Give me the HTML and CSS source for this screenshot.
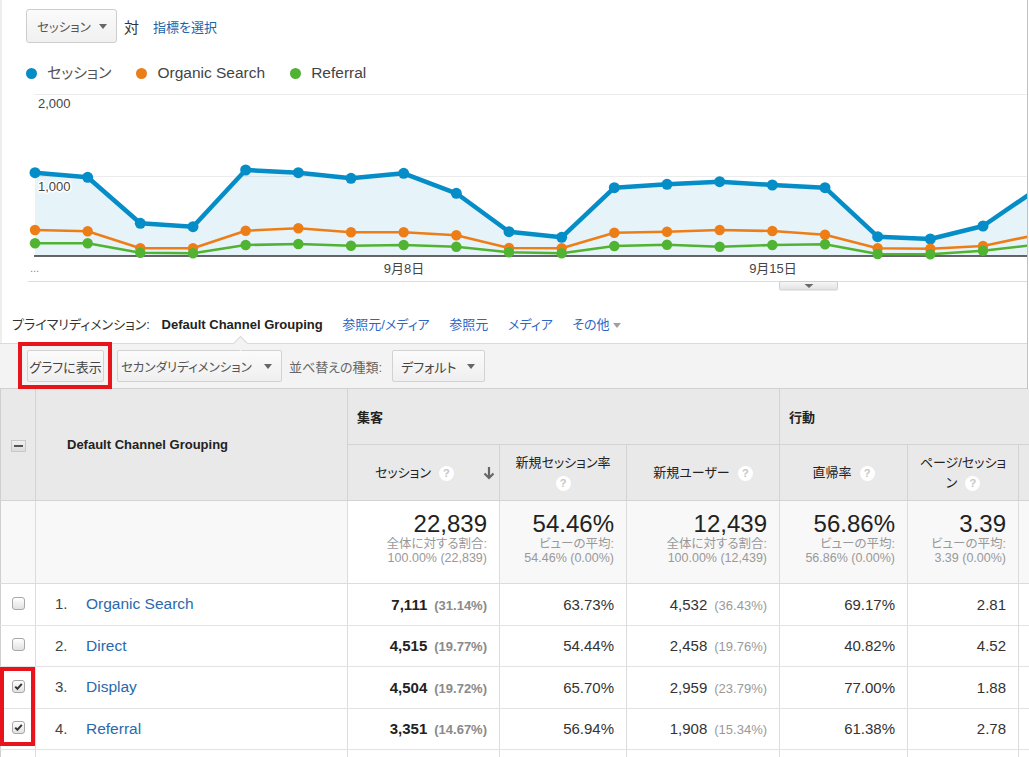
FILE: index.html
```html
<!DOCTYPE html>
<html lang="ja">
<head>
<meta charset="utf-8">
<title>Channels</title>
<link rel="stylesheet" href="styles.css">
</head>
<body>
<div class="top">
  <div class="controls">
    <div class="select metric-select"><span>セッション</span><span class="caret"></span></div>
    <span class="vs">対</span>
    <a class="link pick" href="#">指標を選択</a>
  </div>
  <div class="legend">
    <span class="lg"><span class="dot blue"></span><span class="lg-jp">セッション</span></span>
    <span class="lg"><span class="dot orange"></span>Organic Search</span>
    <span class="lg"><span class="dot green"></span>Referral</span>
  </div>
  <svg class="chart" width="1027" height="202" viewBox="0 0 1027 202">
    <defs>
      <clipPath id="clip"><rect x="0" y="0" width="1027" height="202"/></clipPath>
      <marker id="mb" viewBox="-6 -6 12 12" refX="0" refY="0" markerWidth="12" markerHeight="12" markerUnits="userSpaceOnUse"><circle r="5.5" fill="#058dc7"/></marker>
      <marker id="mo" viewBox="-6 -6 12 12" refX="0" refY="0" markerWidth="12" markerHeight="12" markerUnits="userSpaceOnUse"><circle r="5.2" fill="#ed7e17"/></marker>
      <marker id="mg" viewBox="-6 -6 12 12" refX="0" refY="0" markerWidth="12" markerHeight="12" markerUnits="userSpaceOnUse"><circle r="5.2" fill="#50b432"/></marker>
      <linearGradient id="tabg" x1="0" y1="0" x2="0" y2="1"><stop offset="0" stop-color="#f7f7f7"/><stop offset="1" stop-color="#e2e2e2"/></linearGradient>
    </defs>
    <line x1="34" y1="4.5" x2="1027" y2="4.5" class="grid"/>
    <line x1="34" y1="86.5" x2="1027" y2="86.5" class="grid"/>
    <g clip-path="url(#clip)">
      <polygon class="area" points="35,166 35,82.7 87.67,87.3 140.33,133.3 193,136.7 245.67,80 298.33,82.7 351,88.3 403.67,83.3 456.33,103.3 509,141.7 561.67,147.3 614.33,97.7 667,94.3 719.67,91.7 772.33,95 825,97.7 877.67,146.7 930.33,149 983,136 1035.67,100 1035.67,166"/>
    </g>
    <text x="38" y="18" class="ylab">2,000</text>
    <text x="38" y="101" class="ylab halo">1,000</text>
    <line x1="34" y1="166" x2="1027" y2="166" class="base"/>
    <g clip-path="url(#clip)">
      <polyline class="s-blue" marker-start="url(#mb)" marker-mid="url(#mb)" points="35,82.7 87.67,87.3 140.33,133.3 193,136.7 245.67,80 298.33,82.7 351,88.3 403.67,83.3 456.33,103.3 509,141.7 561.67,147.3 614.33,97.7 667,94.3 719.67,91.7 772.33,95 825,97.7 877.67,146.7 930.33,149 983,136 1035.67,100"/>
      <polyline class="s-orange" marker-start="url(#mo)" marker-mid="url(#mo)" points="35,140 87.67,141.3 140.33,158.3 193,158.3 245.67,140.7 298.33,138.3 351,142.3 403.67,142.3 456.33,145.3 509,158 561.67,158.3 614.33,142.7 667,141.7 719.67,140 772.33,141 825,144.7 877.67,158.3 930.33,158.7 983,156 1035.67,145"/>
      <polyline class="s-green" marker-start="url(#mg)" marker-mid="url(#mg)" points="35,153.3 87.67,153.3 140.33,162.7 193,163.3 245.67,155 298.33,154 351,155.7 403.67,155 456.33,156.7 509,162.3 561.67,163.3 614.33,156 667,154.7 719.67,156.7 772.33,155 825,154.3 877.67,164 930.33,164.3 983,160.7 1035.67,154.7"/>
    </g>
    <text x="30" y="182" class="dots">...</text>
    <text x="404" y="183" class="xlab" text-anchor="middle">9月8日</text>
    <text x="773" y="183" class="xlab" text-anchor="middle">9月15日</text>
    <line x1="28" y1="191.5" x2="1027" y2="191.5" class="bottom"/>
    <rect x="779.5" y="191.5" width="58" height="8.5" rx="1.5" fill="url(#tabg)" stroke="#cfcfcf"/>
    <polygon points="804.5,194 813.5,194 809,198" fill="#6a6a6a"/>
  </svg>
  <div class="dims">
    <span class="dim-label">プライマリディメンション:</span>
    <span class="dim-current">Default Channel Grouping</span>
    <a class="dim-link" href="#">参照元/メディア</a>
    <a class="dim-link" href="#">参照元</a>
    <a class="dim-link" href="#">メディア</a>
    <a class="dim-link" href="#">その他<span class="caret small"></span></a>
  </div>
  <div class="toolbar">
    <div class="btn btn-graph">グラフに表示</div>
    <div class="btn btn-second"><span>セカンダリディメンション</span><span class="caret"></span></div>
    <span class="sort-label">並べ替えの種類:</span>
    <div class="btn btn-default"><span>デフォルト</span><span class="caret"></span></div>
  </div>
</div>

<div class="table-wrap">
  <table class="data">
    <colgroup>
      <col class="c-chk"><col class="c-dim"><col class="c-ses"><col class="c-nsr"><col class="c-nu"><col class="c-br"><col class="c-pps"><col class="c-rest">
    </colgroup>
    <thead>
      <tr class="h1">
        <th rowspan="2" class="chk"><span class="minus"></span></th>
        <th rowspan="2" class="dimh">Default Channel Grouping</th>
        <th colspan="3" class="grp">集客</th>
        <th colspan="3" class="grp">行動</th>
      </tr>
      <tr class="h2">
        <th class="mh"><div class="hsort"><span class="ht">セッション<span class="q">?</span></span><svg class="arrow" width="12" height="14" viewBox="0 0 12 14"><path d="M6 1V12M1.5 7.5L6 12L10.5 7.5" fill="none" stroke="#666" stroke-width="2.2"/></svg></div></th>
        <th class="mh">新規セッション率<br><span class="q q0">?</span></th>
        <th class="mh">新規ユーザー<span class="q">?</span></th>
        <th class="mh">直帰率<span class="q">?</span></th>
        <th class="mh">ページ/セッショ<br>ン<span class="q">?</span></th>
        <th class="mh"></th>
      </tr>
    </thead>
    <tbody>
      <tr class="totals">
        <td class="chk"></td>
        <td></td>
        <td class="tot sorted"><div class="big">22,839</div><div class="sub">全体に対する割合:</div><div class="sub">100.00% (22,839)</div></td>
        <td class="tot"><div class="big">54.46%</div><div class="sub">ビューの平均:</div><div class="sub">54.46% (0.00%)</div></td>
        <td class="tot"><div class="big">12,439</div><div class="sub">全体に対する割合:</div><div class="sub">100.00% (12,439)</div></td>
        <td class="tot"><div class="big">56.86%</div><div class="sub">ビューの平均:</div><div class="sub">56.86% (0.00%)</div></td>
        <td class="tot"><div class="big">3.39</div><div class="sub">ビューの平均:</div><div class="sub">3.39 (0.00%)</div></td>
        <td></td>
      </tr>
      <tr class="row">
        <td class="chk"><span class="cb"></span></td>
        <td class="dimc"><span class="idx">1.</span><a class="rowlink" href="#">Organic Search</a></td>
        <td class="num"><span class="b">7,111</span><span class="pct bp">(31.14%)</span></td>
        <td class="num">63.73%</td>
        <td class="num">4,532<span class="pct">(36.43%)</span></td>
        <td class="num">69.17%</td>
        <td class="num">2.81</td>
        <td></td>
      </tr>
      <tr class="row">
        <td class="chk"><span class="cb"></span></td>
        <td class="dimc"><span class="idx">2.</span><a class="rowlink" href="#">Direct</a></td>
        <td class="num"><span class="b">4,515</span><span class="pct bp">(19.77%)</span></td>
        <td class="num">54.44%</td>
        <td class="num">2,458<span class="pct">(19.76%)</span></td>
        <td class="num">40.82%</td>
        <td class="num">4.52</td>
        <td></td>
      </tr>
      <tr class="row">
        <td class="chk"><span class="cb on"><svg width="11" height="11" viewBox="0 0 11 11"><path d="M2.2 5.6L4.4 7.8L8.8 2.8" fill="none" stroke="#333" stroke-width="2"/></svg></span></td>
        <td class="dimc"><span class="idx">3.</span><a class="rowlink" href="#">Display</a></td>
        <td class="num"><span class="b">4,504</span><span class="pct bp">(19.72%)</span></td>
        <td class="num">65.70%</td>
        <td class="num">2,959<span class="pct">(23.79%)</span></td>
        <td class="num">77.00%</td>
        <td class="num">1.88</td>
        <td></td>
      </tr>
      <tr class="row">
        <td class="chk"><span class="cb on"><svg width="11" height="11" viewBox="0 0 11 11"><path d="M2.2 5.6L4.4 7.8L8.8 2.8" fill="none" stroke="#333" stroke-width="2"/></svg></span></td>
        <td class="dimc"><span class="idx">4.</span><a class="rowlink" href="#">Referral</a></td>
        <td class="num"><span class="b">3,351</span><span class="pct bp">(14.67%)</span></td>
        <td class="num">56.94%</td>
        <td class="num">1,908<span class="pct">(15.34%)</span></td>
        <td class="num">61.38%</td>
        <td class="num">2.78</td>
        <td></td>
      </tr>
      <tr class="row">
        <td class="chk"></td><td></td><td></td><td></td><td></td><td></td><td></td><td></td>
      </tr>
    </tbody>
  </table>
</div>

<div class="mark mark-btn"></div>
<div class="mark mark-chk"></div>
</body>
</html>
```

FILE: styles.css
```css
html, body {
  margin: 0;
  padding: 0;
  overflow: hidden;
  background: #fff;
}
body {
  width: 1029px;
  height: 757px;
  position: relative;
  font-family: "Liberation Sans", "Noto Sans CJK JP", sans-serif;
  font-feature-settings: "palt" 1;
  font-size: 13px;
  color: #333;
}
a { text-decoration: none; }

.top {
  width: 1027px;
  border-right: 1px solid #b7c3cf;
  box-shadow: inset 2px 0 0 #eeeeee;
}

/* metric selector row */
.controls {
  display: flex;
  align-items: center;
  height: 34px;
  padding: 9px 0 0 26px;
}
.select {
  display: flex;
  align-items: center;
  justify-content: space-between;
  box-sizing: border-box;
  height: 34px;
  padding: 0 9px 0 10px;
  border: 1px solid #cdcdcd;
  border-radius: 3px;
  background: linear-gradient(#fbfbfb, #f0f0f0);
  color: #555;
  font-size: 12.5px;
}
.metric-select { width: 91px; }
.caret {
  width: 0;
  height: 0;
  border-left: 4.5px solid transparent;
  border-right: 4.5px solid transparent;
  border-top: 5px solid #666;
}
.caret.small {
  display: inline-block;
  margin-left: 3px;
  vertical-align: middle;
  border-top-color: #a0a0a0;
}
.vs {
  margin-left: 7px;
  font-size: 15px;
  color: #333;
}
.link {
  color: #2262a8;
  font-size: 13px;
}
.pick { margin-left: 14px; }

/* legend */
.legend {
  display: flex;
  align-items: center;
  height: 20px;
  margin-top: 20px;
  padding-left: 26px;
  font-size: 15.5px;
  line-height: 20px;
  color: #444;
}
.lg {
  display: flex;
  align-items: center;
  margin-right: 25px;
}
.lg-jp { color: #555; font-size: 15px; }
.dot {
  width: 11px;
  height: 11px;
  border-radius: 50%;
  margin-right: 10px;
}
.dot.blue { background: #058dc7; }
.dot.orange { background: #ed7e17; }
.dot.green { background: #50b432; }

/* chart */
.chart {
  display: block;
  margin-top: 7px;
}
.chart .grid { stroke: #ececec; stroke-width: 1; }
.chart .base { stroke: #333; stroke-width: 1.3; }
.chart .bottom { stroke: #dcdcdc; stroke-width: 1; }
.chart .area { fill: #058dc7; fill-opacity: 0.1; }
.chart text {
  font-family: "Liberation Sans", "Noto Sans CJK JP", sans-serif;
  font-size: 13px;
  fill: #444;
}
.chart .halo {
  paint-order: stroke;
  stroke: #fff;
  stroke-width: 3px;
  stroke-linejoin: round;
}
.chart .dots { font-size: 11px; fill: #888; }
.s-blue { fill: none; stroke: #058dc7; stroke-width: 4.5; stroke-linejoin: round; }
.s-orange { fill: none; stroke: #ed7e17; stroke-width: 2.6; stroke-linejoin: round; }
.s-green { fill: none; stroke: #50b432; stroke-width: 2.6; stroke-linejoin: round; }

/* dimension switcher */
.dims {
  box-sizing: border-box;
  height: 51px;
  padding: 25px 0 0 12px;
  line-height: 16px;
  white-space: nowrap;
}
.dim-label {
  font-size: 13px;
  color: #333;
  margin-right: 8px;
}
.dim-current {
  font-size: 13px;
  font-weight: bold;
  color: #222;
}
.dim-link {
  margin-left: 16px;
  color: #2f66c4;
  font-size: 13px;
}

/* toolbar */
.toolbar {
  position: relative;
  display: flex;
  align-items: center;
  height: 44px;
  padding-left: 27px;
  border-top: 1px solid #dadada;
  border-bottom: 1px solid #d0d0d0;
  background: #f3f3f3;
}
.toolbar::before {
  content: "";
  position: absolute;
  left: 235px;
  top: -6px;
  width: 10px;
  height: 10px;
  background: #f3f3f3;
  border-left: 1px solid #dadada;
  border-top: 1px solid #dadada;
  transform: rotate(45deg);
}
.btn {
  display: flex;
  align-items: center;
  box-sizing: border-box;
  height: 32px;
  border: 1px solid #d2d2d2;
  border-radius: 2px;
  background: linear-gradient(#fbfbfb, #efefef);
  color: #444;
  font-size: 13px;
  white-space: nowrap;
}
.btn-graph {
  width: 77px;
  justify-content: center;
}
.btn-second {
  width: 165px;
  margin-left: 13px;
  padding: 0 9px 0 3px;
  justify-content: space-between;
  color: #555;
  font-size: 12.5px;
}
.sort-label {
  margin-left: 7px;
  color: #666;
  font-size: 13px;
}
.btn-default {
  width: 93px;
  margin-left: 10px;
  padding: 0 9px 0 8px;
  justify-content: space-between;
}

/* table */
.table-wrap {
  width: 1029px;
  overflow: hidden;
}
table.data {
  border-collapse: collapse;
  table-layout: fixed;
  width: 1218px;
}
.c-chk { width: 35px; }
.c-dim { width: 312px; }
.c-ses { width: 152px; }
.c-nsr { width: 127px; }
.c-nu { width: 153px; }
.c-br { width: 128px; }
.c-pps { width: 111px; }
.c-rest { width: 200px; }

.data th, .data td {
  border: 1px solid #dcdcdc;
  padding: 0;
}
.data thead th {
  background: #e9e9e9;
  color: #333;
  font-weight: normal;
  border-color: #d3d3d3;
}
.data thead tr.h1 th { border-top: none; }
.h1 th { height: 55px; }
.h2 th { height: 55px; }
.data th.chk, .data td.chk {
  text-align: center;
  border-left: 1px solid #cfcfcf;
}
.minus {
  display: inline-block;
  width: 15px;
  height: 12px;
  box-sizing: border-box;
  border: 1px solid #c8c8c8;
  background: linear-gradient(#f0f0f0, #dcdcdc);
  position: relative;
  vertical-align: middle;
}
.minus::after {
  content: "";
  position: absolute;
  left: 2px;
  right: 2px;
  top: 4px;
  height: 2px;
  background: #555;
}
.dimh {
  text-align: left;
  padding-left: 31px !important;
  font-size: 13px;
  font-weight: bold !important;
  color: #222 !important;
}
.grp {
  text-align: left;
  padding-left: 9px !important;
  font-size: 13px;
  font-weight: bold !important;
  color: #222 !important;
}
.mh {
  text-align: center;
  padding: 0 10px !important;
  font-size: 13px;
  line-height: 20px;
  color: #222 !important;
}
.hsort {
  display: flex;
  align-items: center;
  margin: 0 -6px 0 -12px;
}
.ht {
  flex: 1;
  text-align: center;
}
.arrow { flex: none; }
.q {
  display: inline-block;
  width: 15px;
  height: 15px;
  margin-left: 8px;
  border-radius: 50%;
  background: #fff;
  color: #c6c6c6;
  font-family: "Liberation Sans", sans-serif;
  font-size: 11px;
  font-weight: bold;
  line-height: 15px;
  text-align: center;
  vertical-align: middle;
}
.q.q0 { margin-left: 0; }

/* totals */
.totals td {
  height: 72px;
  background: #f8f8f8;
  vertical-align: top;
}
.totals td.sorted { background: #fff; }
.tot {
  text-align: right;
  padding: 10px 12px 0 0 !important;
}
.big {
  font-size: 24px;
  line-height: 26px;
  color: #222;
}
.sub {
  font-size: 12.5px;
  line-height: 14px;
  color: #999;
}

/* rows */
.row td {
  height: 40.5px;
  border-color: #e3e3e3 #dcdcdc;
  vertical-align: middle;
}
.cb {
  display: inline-flex;
  align-items: center;
  justify-content: center;
  box-sizing: border-box;
  width: 13px;
  height: 13px;
  border: 1px solid #a8a8a8;
  border-radius: 3px;
  background: linear-gradient(#ffffff, #e1e1e1);
  vertical-align: middle;
  margin-top: -4px;
}
.dimc {
  padding-left: 19px !important;
  font-size: 15px;
  white-space: nowrap;
}
.idx {
  display: inline-block;
  width: 31px;
  color: #444;
}
.rowlink {
  color: #2a69ad;
  font-size: 15.5px;
}
.num {
  text-align: right;
  padding-right: 12px !important;
  font-size: 15px;
  color: #333;
  white-space: nowrap;
}
.b {
  font-weight: bold;
  color: #222;
}
.pct {
  margin-left: 7px;
  font-size: 13px;
  color: #999;
}
.pct.bp {
  font-weight: bold;
  color: #8a8a8a;
}

/* annotation overlays */
.mark {
  position: absolute;
  box-sizing: border-box;
  border: 4px solid #e8141c;
}
.mark-btn {
  left: 18px;
  top: 342px;
  width: 94px;
  height: 47px;
}
.mark-chk {
  left: 0;
  top: 667px;
  width: 35px;
  height: 79px;
}
```
